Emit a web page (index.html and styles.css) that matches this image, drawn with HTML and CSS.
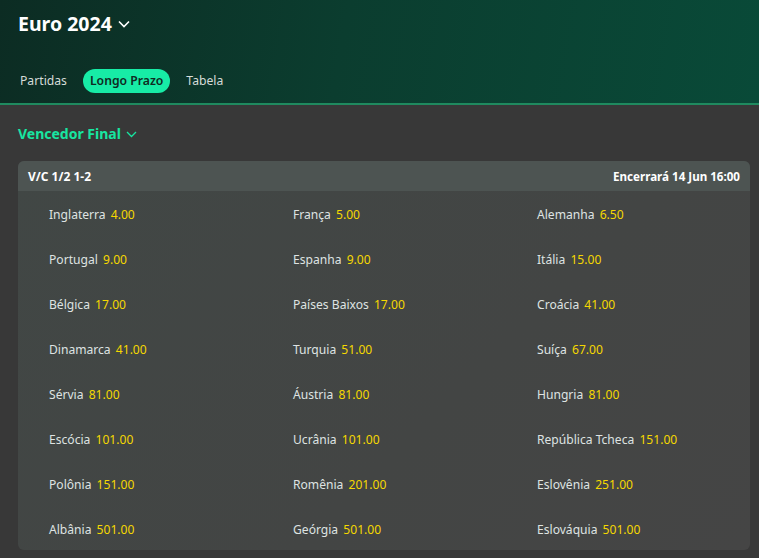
FILE: index.html
```html
<!DOCTYPE html>
<html lang="pt">
<head>
<meta charset="utf-8">
<link rel="stylesheet" href="styles.css">
</head>
<body>
<header class="hero">
  <h1 class="title">Euro 2024 <svg class="chev" width="12" height="8" viewBox="0 0 12 8"><path d="M1 1.5 L6 6.5 L11 1.5" fill="none" stroke="#fff" stroke-width="1.6"/></svg></h1>
  <nav class="tabs">
    <span class="tab">Partidas</span>
    <span class="tab active">Longo Prazo</span>
    <span class="tab">Tabela</span>
  </nav>
</header>
<main class="content">
  <h2 class="market">Vencedor Final <svg class="chev" width="11" height="7" viewBox="0 0 11 7"><path d="M1 1 L5.5 5.5 L10 1" fill="none" stroke="#17e6a1" stroke-width="1.3"/></svg></h2>
  <section class="card">
    <div class="card-head"><span>V/C 1/2 1-2</span><span>Encerrará 14 Jun 16:00</span></div>
    <div class="grid">
      <div class="cell">Inglaterra <b>4.00</b></div>
      <div class="cell">França <b>5.00</b></div>
      <div class="cell">Alemanha <b>6.50</b></div>
      <div class="cell">Portugal <b>9.00</b></div>
      <div class="cell">Espanha <b>9.00</b></div>
      <div class="cell">Itália <b>15.00</b></div>
      <div class="cell">Bélgica <b>17.00</b></div>
      <div class="cell">Países Baixos <b>17.00</b></div>
      <div class="cell">Croácia <b>41.00</b></div>
      <div class="cell">Dinamarca <b>41.00</b></div>
      <div class="cell">Turquia <b>51.00</b></div>
      <div class="cell">Suíça <b>67.00</b></div>
      <div class="cell">Sérvia <b>81.00</b></div>
      <div class="cell">Áustria <b>81.00</b></div>
      <div class="cell">Hungria <b>81.00</b></div>
      <div class="cell">Escócia <b>101.00</b></div>
      <div class="cell">Ucrânia <b>101.00</b></div>
      <div class="cell">República Tcheca <b>151.00</b></div>
      <div class="cell">Polônia <b>151.00</b></div>
      <div class="cell">Romênia <b>201.00</b></div>
      <div class="cell">Eslovênia <b>251.00</b></div>
      <div class="cell">Albânia <b>501.00</b></div>
      <div class="cell">Geórgia <b>501.00</b></div>
      <div class="cell">Eslováquia <b>501.00</b></div>
    </div>
  </section>
</main>
</body>
</html>
```
FILE: styles.css
```css
* { box-sizing: border-box; }
html, body { margin: 0; padding: 0; }
body {
  background: #383838;
  font-family: "Noto Sans", "Open Sans", sans-serif;
  color: #e6e6e6;
  height: 558px;
  overflow: hidden;
}
.hero {
  height: 105px;
  background: linear-gradient(100deg, #0c2c23 0%, #0b3d2f 45%, #094a38 100%);
  border-bottom: 2px solid #1f8a5f;
  padding: 12px 18px 0;
}
.title {
  margin: 0;
  font-size: 19.5px;
  font-weight: 700;
  color: #fff;
  line-height: 24px;
  display: flex;
  align-items: center;
  gap: 6px;
}
.chev { display: block; }
.tabs {
  margin-top: 33px;
  display: flex;
  align-items: center;
  gap: 16px;
}
.tab {
  font-size: 12.2px;
  color: #d6dcd9;
  height: 24px;
  line-height: 24px;
  border-radius: 12px;
}
.tab:first-child { padding-left: 2px; }
.tab.active {
  background: #17eca6;
  color: #0f2a22;
  font-weight: 600;
  padding: 0 7px;
}
.content { padding: 18px 9px 0 18px; }
.market {
  margin: 0;
  font-size: 14px;
  font-weight: 700;
  color: #17e6a1;
  line-height: 22px;
  display: flex;
  align-items: center;
  gap: 5px;
}
.card {
  margin-top: 16px;
  border-radius: 6px;
  overflow: hidden;
  background: linear-gradient(135deg, #414745 0%, #434544 60%, #454545 100%);
  height: 389px;
}
.card-head {
  height: 30px;
  background: #4d5452;
  display: flex;
  justify-content: space-between;
  align-items: center;
  padding: 0 10px;
  font-size: 12px;
  font-weight: 700;
  color: #fff;
}
.card-head span:last-child { font-size: 11.6px; }
.grid {
  display: grid;
  grid-template-columns: repeat(3, 1fr);
  grid-auto-rows: 45px;
  padding-top: 1px;
}
.cell {
  padding-left: 31px;
  font-size: 12.1px;
  line-height: 45px;
  color: #dfe3e2;
  white-space: nowrap;
}
.cell b {
  font-weight: 400;
  color: #f5d800;
  margin-left: 2px;
}
```
